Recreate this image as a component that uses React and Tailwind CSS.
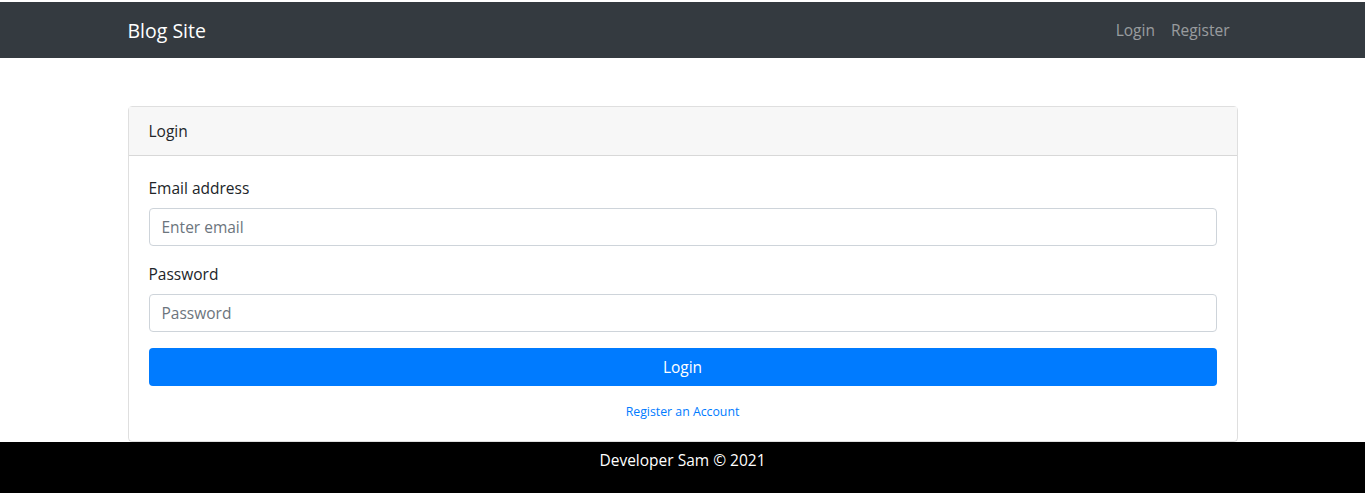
export default function App() {
  return (
    <div className="min-h-[493px] flex flex-col bg-white text-[#212529] text-[15.5px] leading-6" style={{ fontFamily: '"Open Sans", "Noto Sans", sans-serif' }}>
      <div className="h-[2px] bg-white" />

      {/* Navbar */}
      <nav className="bg-[#343a40] h-14">
        <div className="w-[1140px] mx-auto px-[15px] h-full flex items-center justify-between">
          <a href="#" className="text-white text-[19.5px] leading-[30px] pt-[2px]">Blog Site</a>
          <ul className="flex">
            <li><a href="#" className="block px-2 py-2 text-white/50">Login</a></li>
            <li><a href="#" className="block px-2 py-2 text-white/50">Register</a></li>
          </ul>
        </div>
      </nav>

      {/* Main */}
      <main className="w-[1140px] mx-auto px-[15px] pt-12">
        <div className="border border-black/[0.125] rounded">
          <div className="bg-[#f7f7f7] px-5 py-3 leading-6 border-b border-black/[0.125]">Login</div>
          <form className="p-5" onSubmit={(e) => e.preventDefault()}>
            <div className="mb-4">
              <label className="block mb-2 leading-6">Email address</label>
              <input
                type="email"
                placeholder="Enter email"
                className="block w-full h-[38px] px-3 border border-[#ced4da] rounded placeholder:text-[#6c757d] text-[#495057] outline-none"
              />
            </div>
            <div className="mb-4">
              <label className="block mb-2 leading-6">Password</label>
              <input
                type="password"
                placeholder="Password"
                className="block w-full h-[38px] px-3 border border-[#ced4da] rounded placeholder:text-[#6c757d] text-[#495057] outline-none"
              />
            </div>
            <button type="submit" className="w-full h-[38px] bg-[#007bff] text-white rounded leading-6">Login</button>
            <div className="mt-4 text-center text-[12.3px] leading-[19px]">
              <a href="#" className="text-[#007bff]">Register an Account</a>
            </div>
          </form>
        </div>
      </main>

      {/* Footer */}
      <footer className="flex-1 bg-black text-white text-center pt-[6px] leading-6">
        Developer Sam © 2021
      </footer>
    </div>
  );
}
